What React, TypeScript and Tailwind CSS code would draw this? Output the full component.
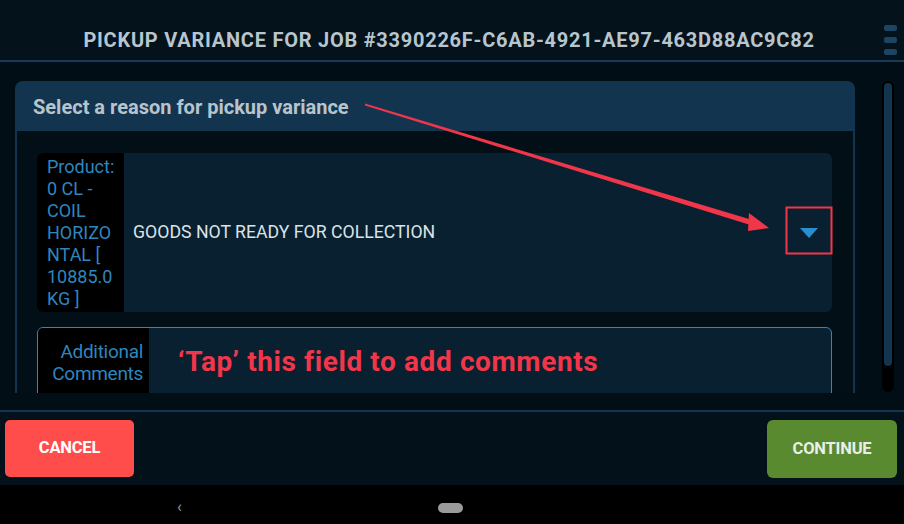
import React from "react";

function MenuDots() {
  return (
    <div className="flex flex-col gap-[6px]">
      <div className="w-[13px] h-[6px] rounded-[2px] bg-[#1d4463]" />
      <div className="w-[13px] h-[6px] rounded-[2px] bg-[#1d4463]" />
      <div className="w-[13px] h-[6px] rounded-[2px] bg-[#1d4463]" />
    </div>
  );
}

// Red annotation drawn over the page
function Annotation() {
  return (
    <svg
      className="absolute left-0 top-0 pointer-events-none"
      width="904"
      height="524"
      viewBox="0 0 904 524"
    >
      <polygon points="365,103.5 754,220.5 752,225.5 365,105.5" fill="#f2364a" />
      <polygon points="749,213 769,228 748,231" fill="#f2364a" />
      <rect x="786.5" y="207.5" width="45" height="46" fill="none" stroke="#f2364a" strokeWidth="2" />
    </svg>
  );
}

export default function App() {
  return (
    <div
      className="relative w-[904px] h-[524px] overflow-hidden bg-[#020e16] flex flex-col"
      style={{ fontFamily: "Roboto, 'Noto Sans', sans-serif" }}
    >
      {/* Header */}
      <div className="h-[60px] bg-[#04121c] flex items-center relative shrink-0">
        <h1 className="flex-1 text-center text-[20px] font-bold tracking-[0.75px] text-[#b9c5cd] pt-[20px] pr-[6px]">
          PICKUP VARIANCE FOR JOB #3390226F-C6AB-4921-AE97-463D88AC9C82
        </h1>
        <div className="absolute right-[7px] top-[25px]">
          <MenuDots />
        </div>
      </div>
      <div className="h-[2px] bg-[#173a57] shrink-0" />

      {/* Scroll area */}
      <div className="h-[331px] shrink-0 flex overflow-hidden">
        <div className="flex-1 pl-[15px] pt-[19px] pr-[27px]">
          <div className="rounded-t-[8px] border-2 border-b-0 border-[#12344f] h-[320px] flex flex-col">
            <div className="h-[48px] bg-[#12344f] flex items-center px-[16px] shrink-0">
              <span className="text-[20px] font-bold text-[#b8c4cc]">Select a reason for pickup variance</span>
            </div>
            <div className="flex-1 bg-[#020f17] pl-[20px] pr-[21px] pt-[22px] flex flex-col gap-[15px]">
              {/* Dropdown */}
              <div className="h-[159px] rounded-[6px] bg-[#082030] flex overflow-hidden shrink-0">
                <div className="w-[87px] bg-black text-[#2e86bf] text-[18px] leading-[22px] pl-[10px] pr-[4px] pt-[3px] break-words">
                  Product: 0 CL - COIL HORIZONTAL [ 10885.0 KG ]
                </div>
                <div className="flex-1 flex items-center pl-[9px] pr-[14px]">
                  <span className="flex-1 text-[17.7px] text-[#dce3e7]">GOODS NOT READY FOR COLLECTION</span>
                  <svg width="18" height="10" viewBox="0 0 18 10">
                    <polygon points="0,0 18,0 9,10" fill="#2a8fd2" />
                  </svg>
                </div>
              </div>
              {/* Comments */}
              <div className="h-[80px] rounded-[6px] border border-[#2f86c2] bg-[#082030] flex overflow-hidden shrink-0">
                <div className="w-[111px] bg-black text-[#2e86bf] text-[19px] leading-[22px] tracking-[-0.3px] text-right pr-[6px] pt-[13px]">
                  Additional
                  <br />
                  Comments
                </div>
                <div className="flex-1 pl-[29px] pt-[13px]">
                  <span className="text-[28px] font-bold text-[#f2364a] tracking-[0.6px]">‘Tap’ this field to add comments</span>
                </div>
              </div>
            </div>
          </div>
        </div>
        {/* Scrollbar */}
        <div className="w-[12px] mr-[10px] mt-[19px] mb-[1px] rounded-full bg-black p-[2px] pb-[26px]">
          <div className="h-full rounded-full bg-[#12344f]" />
        </div>
      </div>

      <div className="h-[17px] shrink-0" />
      <div className="h-[2px] bg-[#143450] shrink-0" />

      {/* Footer */}
      <div className="h-[73px] bg-[#03111a] flex items-start justify-between px-[5px] pt-[8px] shrink-0">
        <button className="w-[129px] h-[57px] rounded-[5px] bg-[#ff4d4b] text-white font-bold text-[16.5px] tracking-[-0.2px]">
          CANCEL
        </button>
        <button className="w-[130px] h-[58px] mr-[2px] rounded-[6px] bg-[#5a8a2f] text-[#e8f0ea] font-bold text-[16.5px] tracking-[-0.2px]">
          CONTINUE
        </button>
      </div>

      {/* Android nav bar */}
      <div className="flex-1 bg-black flex items-center relative">
        <span className="absolute left-[177px] top-[10px] text-[#9a9a9a] text-[16px]">‹</span>
        <div className="absolute left-[438px] top-[18px] w-[25px] h-[10px] rounded-full bg-[#9b9b9b]" />
      </div>

      <Annotation />
    </div>
  );
}
